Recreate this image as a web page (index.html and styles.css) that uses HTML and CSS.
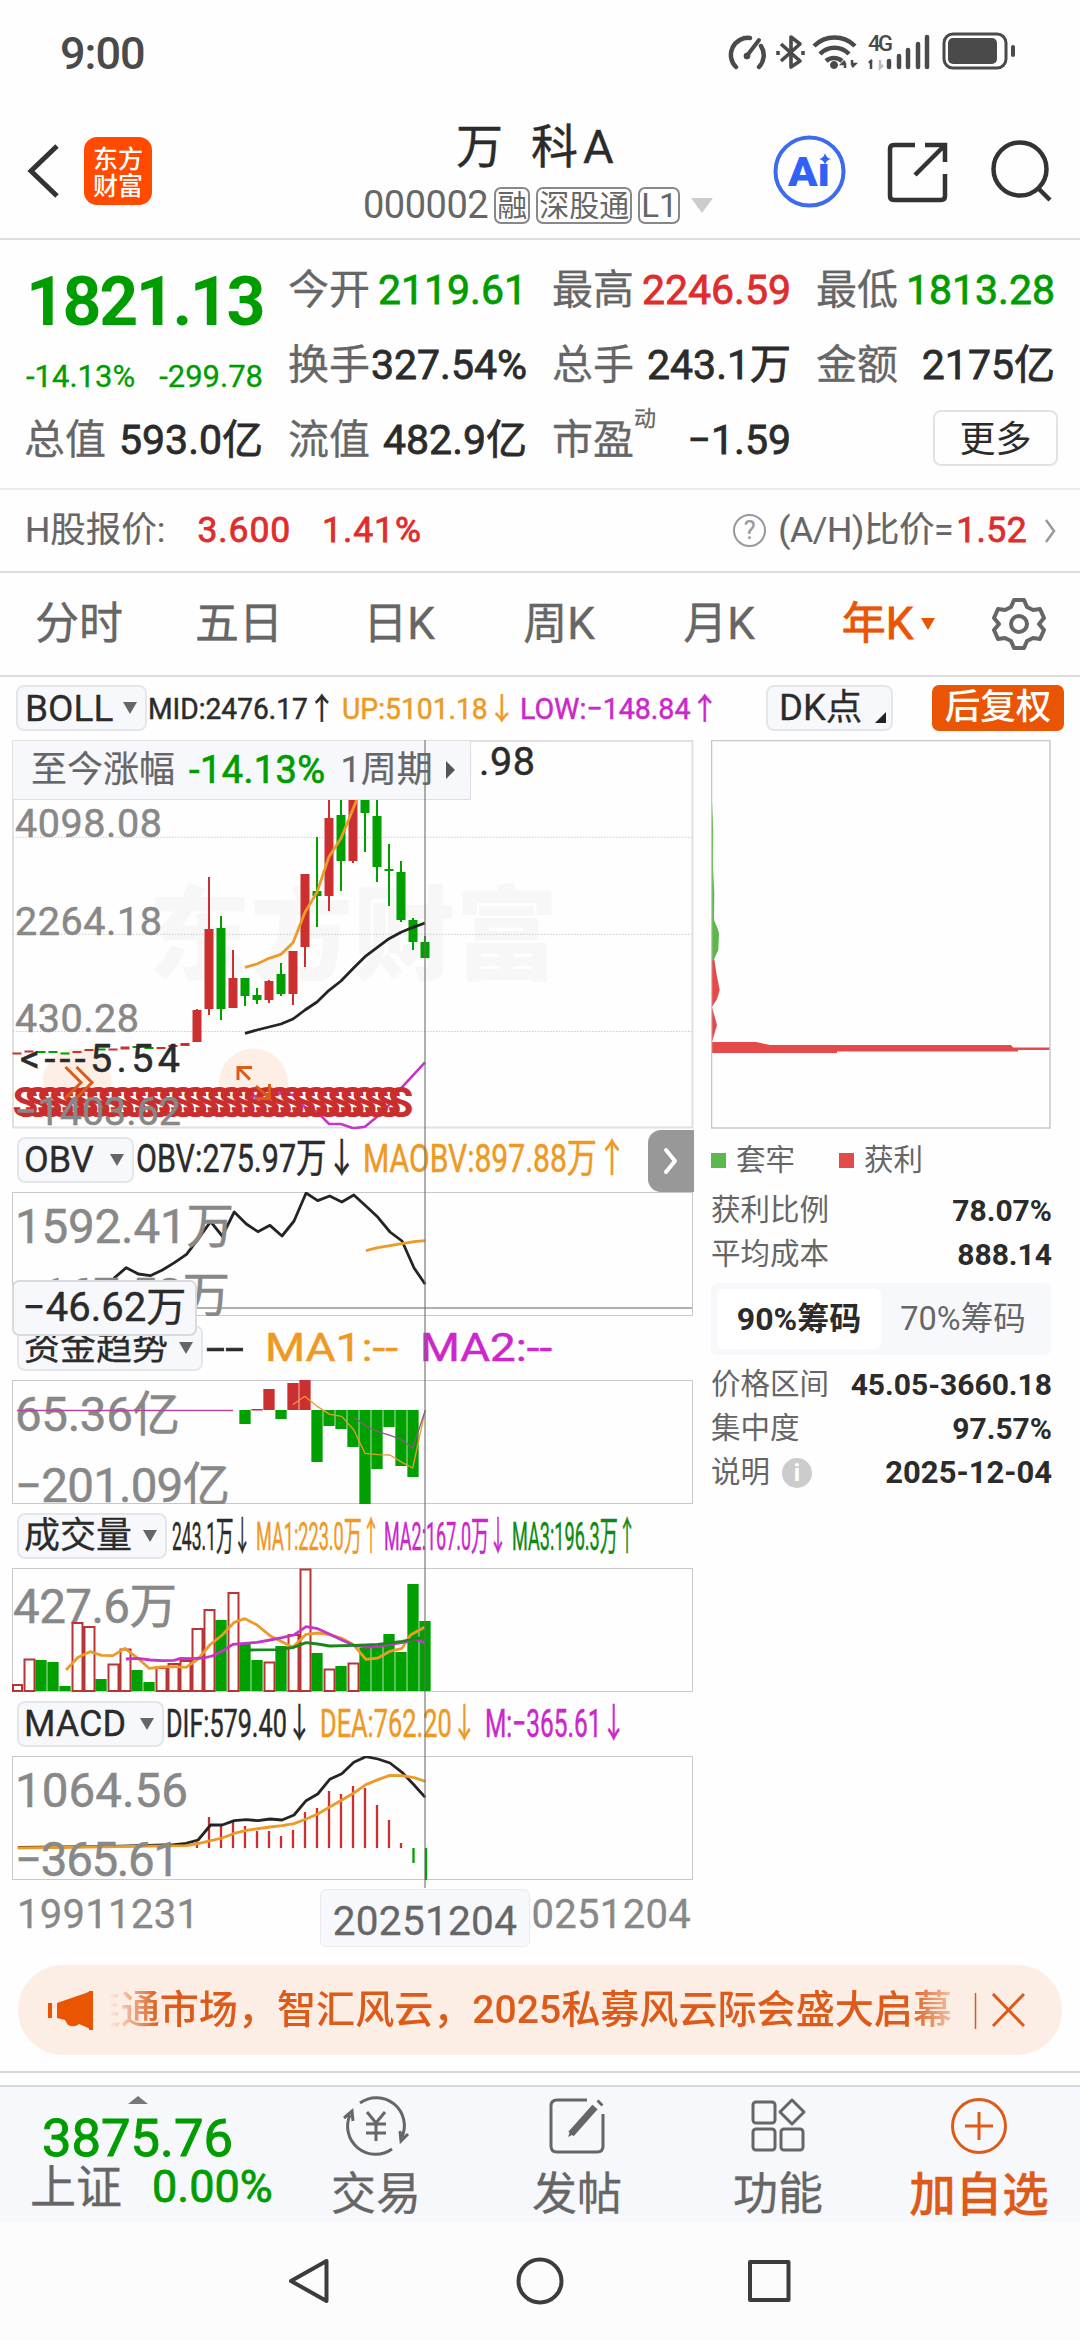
FILE: index.html
```html
<!DOCTYPE html>
<html lang="zh-CN">
<head>
<meta charset="utf-8">
<title>万 科A 000002</title>
<link rel="stylesheet" href="styles.css">
</head>
<body>
<div class="status">
  <span class="clock">9:00</span>
  <svg class="status-icons" width="300" height="44" viewBox="722 30 300 44" fill="none" stroke="#4a4a4a">
    <path d="M736 67a17 17 0 0 1 14-29M761 46a17 17 0 0 1-2 21" stroke-width="4.5" stroke-linecap="round"/>
    <path d="M759 40L746 57" stroke-width="4" stroke-linecap="round"/><circle cx="747" cy="56" r="3" fill="#4a4a4a"/>
    <path d="M781 44L800 61L791 67V37L800 44L781 61" stroke-width="3.6" stroke-linejoin="round"/>
    <path d="M778 51v4M803 51v4" stroke-width="3.5"/>
    <path d="M814 46a29 29 0 0 1 41 0M820 54a20 20 0 0 1 29 0M826 61a12 12 0 0 1 16 0" stroke-width="4.5"/>
    <circle cx="834" cy="65" r="3.5" fill="#4a4a4a"/>
    <path d="M845 61l-3 3h3v4M852 67l3-3h-3v-4" stroke-width="2.5"/>
    <text class="net" x="868" y="51" textLength="25">4G</text>
    <path d="M871 61v8M869 63l3-3" stroke-width="2.5"/><path d="M880 60v8l3-3" stroke="#bbb" stroke-width="2.5"/>
    <path d="M889 61v6M899 56v11M908 50v17M918 44v23M927 37v30" stroke-width="4.5" stroke-linecap="round"/>
    <rect x="944" y="34" width="62" height="34" rx="9" stroke-width="3"/>
    <rect x="948" y="38" width="49" height="26" rx="5" fill="#4a4a4a" stroke="none"/>
    <path d="M1013 47v8" stroke-width="4" stroke-linecap="round"/>
  </svg>
</div>
<header class="header">
  <div class="header-left">
    <svg width="38" height="60" viewBox="25 142 38 60" fill="none" stroke="#333" stroke-width="5"><path d="M57 147L31 172L57 197"/></svg>
    <div class="logo"><span>东方</span><span>财富</span></div>
  </div>
  <div class="title-block">
    <div class="name"><span>万</span><span>科A</span></div>
    <div class="code"><span class="digits">000002</span><i>融</i><i>深股通</i><i>L1</i><b class="drop"></b></div>
  </div>
  <svg class="header-icons" width="290" height="80" viewBox="770 132 290 80" fill="none" stroke="#333" stroke-width="4.5">
    <circle cx="808.5" cy="171.5" r="34" stroke="#3c6bed" stroke-width="4"/>
    <text class="ai" x="787" y="186" textLength="42" lengthAdjust="spacingAndGlyphs">Aı</text>
    <path d="M824 153q1 5 6 6q-5 1-6 6q-1-5-6-6q5-1 6-6z" fill="#2f62f5" stroke="none"/>
    <path d="M914 145H893q-4 0-4 4V196q0 4 4 4H940q4 0 4-4V174M924 145h20v17M943 146L914 175"/>
    <circle cx="1019" cy="169" r="26.5"/><path d="M1037 188L1049 200"/>
  </svg>
</header>
<section class="quote">
  <div class="price">
    <strong>1821.13</strong>
    <div class="change"><span>-14.13%</span><span>-299.78</span></div>
  </div>
  <div class="cell"><span>今开</span><b class="down">2119.61</b></div>
  <div class="cell"><span>最高</span><b class="up">2246.59</b></div>
  <div class="cell"><span>最低</span><b class="down">1813.28</b></div>
  <div class="cell"><span>换手</span><b>327.54%</b></div>
  <div class="cell"><span>总手</span><b>243.1万</b></div>
  <div class="cell"><span>金额</span><b>2175亿</b></div>
  <div class="cell"><span>总值</span><b>593.0亿</b></div>
  <div class="cell"><span>流值</span><b>482.9亿</b></div>
  <div class="cell"><span>市盈<sup>动</sup></span><b>−1.59</b></div>
  <div class="more"><button>更多</button></div>
</section>
<section class="hshare">
  <span class="h-label">H股报价:</span><span class="up h-price">3.600</span><span class="up h-rate">1.41%</span>
  <span class="help">?</span><span class="ratio">(A/H)比价=</span><span class="up h-ratio">1.52</span>
  <svg class="chev" width="12" height="28" viewBox="0 0 12 28" fill="none" stroke="#999" stroke-width="2.5"><path d="M2 3L10 14L2 25"/></svg>
</section>
<nav class="tabs">
  <span>分时</span><span>五日</span><span>日K</span><span>周K</span><span>月K</span>
  <span class="active">年K<b class="drop"></b></span>
  <svg width="56" height="56" viewBox="-28 -28 56 56" fill="none" stroke="#666" stroke-width="4" stroke-linejoin="round">
    <path d="M-5-24H5L8-17L14-14L21-15L25-6L20 0L25 6L21 15L14 14L8 17L5 24H-5L-8 17L-14 14L-21 15L-25 6L-20 0L-25-6L-21-15L-14-14L-8-17Z"/><circle r="8"/>
  </svg>
</nav>
<section class="boll-row">
  <span class="pick boll">BOLL<b class="drop"></b></span>
  <svg class="readout" width="580" height="50" viewBox="147 682 580 50">
    <text x="148" y="719" textLength="188" lengthAdjust="spacingAndGlyphs" class="t30 ink">MID:2476.17↑</text>
    <text x="342" y="719" textLength="174" lengthAdjust="spacingAndGlyphs" class="t30 orange">UP:5101.18↓</text>
    <text x="520" y="719" textLength="199" lengthAdjust="spacingAndGlyphs" class="t30 violet">LOW:−148.84↑</text>
  </svg>
  <span class="pick dk">DK点<b class="corner"></b></span>
  <span class="adjust">后复权</span>
</section>
<main class="analysis">
  <div class="charts">
    <svg class="panel" width="682" height="389" viewBox="12 740 682 389">
      <rect x="13" y="741" width="679.5" height="386.500" class="frame light"/>
      <text x="148" y="972" textLength="410" lengthAdjust="spacingAndGlyphs" class="watermark">东方财富</text>
      <path class="dots" d="M13 837.300H692M13 934.300H692M13 1031.500H692"/>
      <circle cx="77" cy="1083" r="34.500" class="knob"/><circle cx="253.500" cy="1083" r="34.500" class="knob"/>
      <g class="wick">
        <path class="r" d="M197 1009V1042M209 877V1015M233 950V1008M269 980V1003M293 951V1005M305 874V967M329 780V911M353 780V863"/>
        <path class="g" d="M221 916V1020M245 978V1006M257 988V1004M281 963V996M317 837V927M341 790V891M365 780V852M377 790V882M389 844V906M401 861V922M413 918V950M425 936V958"/>
      </g>
      <g class="body">
        <path class="r" d="M197 1010V1042M209 929V1009M233 978V1008M269 981V1000M293 951V994M305 874V947M329 818V896M353 790V861"/>
        <path class="g" d="M221 928V1009M245 978V996M257 995V1000M281 974V994M317 891V896M341 815V861M365 780V813M377 816V867M389 869V871M401 872V920M413 920V942M425 942V958"/>
        <path class="r" d="M17 1052.500v2M29 1050.500v2M77 1051v2M89 1049v2M113 1048.500v2M125 1046.500v3M161 1047v2M173 1045v2M185 1043v3"/>
        <path class="g" d="M41 1051v2M53 1051v2M65 1052.500v2M101 1048.500v2M137 1046v2M149 1047v2"/>
      </g>
      <g transform="translate(0 720) scale(.33333)" class="lines">
        <path class="orange" d="M735 742L771 732L807 715L843 703L879 668L915 577L951 517L987 410L1023 355L1060 265L1095 180"/>
        <path class="ink" d="M735 940L771 930L807 921L843 912L879 897L915 870L951 846L987 811L1023 783L1060 745L1095 710L1131 683L1167 656L1203 637L1239 622L1275 609"/>
      </g>
      <path class="violet thin2" transform="translate(0 720) scale(.33333)" d="M735 1135L771 1128L807 1122L843 1120L879 1125L915 1162L951 1175L987 1212L1023 1212L1060 1225L1095 1220L1131 1190L1167 1155L1203 1105L1275 1027"/>
      <text x="12.500 24.600 36.700 48.800 60.900 73 85.100 97.200 109.300 121.400 133.500 145.600 157.700 169.800 181.900 194 206.100 218.200 230.300 242.400 254.500 266.600 278.700 290.800 302.900 315 327.100 339.200 351.300 363.400 375.500 387.600" y="1117" class="sells">SSSSSSSSSSSSSSSSSSSSSSSSSSSSSSSS</text>
      <path class="arrows" d="M65.500 1067L81 1082.500L65.500 1098M76.500 1067L92 1082.500L76.500 1098M238 1080V1067.500H252M239 1068.500L250 1079.500M269.500 1084V1098.500H255M268 1097L256 1086"/>
      <text x="15" y="836.500" textLength="147" class="t40 axis">4098.08</text>
      <text x="15" y="934.500" textLength="147" class="t40 axis">2264.18</text>
      <text x="15" y="1031.500" textLength="124" class="t40 axis">430.28</text>
      <text x="15" y="1125" textLength="166" class="t40 axis">−1403.62</text>
      <text x="20" y="1072" textLength="160" class="t40 ink">&lt;---5.54</text>
      <text x="388" y="775" textLength="147" class="t40 ink">5931.98</text>
    </svg>
    <div class="since"><span>至今涨幅</span><span class="down">-14.13%</span><span>1周期</span><b></b></div>

    <div class="ind"><span class="pick" style="width:117px">OBV<b class="drop"></b></span>
      <svg class="readout" width="540" height="64" viewBox="134 1128 540 64">
        <text x="136" y="1172" textLength="221" lengthAdjust="spacingAndGlyphs" class="t40 ink">OBV:275.97万↓</text>
        <text x="363" y="1172" textLength="264" lengthAdjust="spacingAndGlyphs" class="t40 orange">MAOBV:897.88万↑</text>
      </svg>
      <span class="expand"><svg width="16" height="28" viewBox="0 0 16 28" fill="none" stroke="#fff" stroke-width="4" stroke-linecap="round" stroke-linejoin="round"><path d="M3 3L12 14L3 25"/></svg></span>
    </div>
    <svg class="panel" width="682" height="124" viewBox="12 1192 682 124">
      <rect x="12.500" y="1192.500" width="680" height="123" class="frame"/>
      <g transform="translate(0 1130) scale(.4462 .33333)" class="lines">
        <path class="ink" d="M255 445L283 413L310 432L337 437L364 420L391 398L418 373L445 325L472 275L498 318L525 246L552 282L578 305L605 286L632 318L659 273L686 189L712 212L739 198L766 216L793 195L820 228L847 262L874 306L901 333L928 414L953 463"/>
        <path class="orange" d="M820 362L847 353L874 347L901 341L928 335L953 332"/>
      </g>
      <path d="M13 1308H692" class="cross"/>
      <text x="15" y="1243" textLength="219" class="t48 axis">1592.41万</text>
      <text x="15" y="1312" textLength="215" class="t48 axis">−167.58万</text>
    </svg>

    <div class="ind"><span class="pick" style="width:186px">资金趋势<b class="drop"></b></span>
      <svg class="readout" width="480" height="64" viewBox="203 1316 480 64">
        <text x="206" y="1361" textLength="38" lengthAdjust="spacingAndGlyphs" class="t40 ink">--</text>
        <text x="265" y="1361" textLength="133" lengthAdjust="spacingAndGlyphs" class="t40 orange">MA1:--</text>
        <text x="420" y="1361" textLength="132" lengthAdjust="spacingAndGlyphs" class="t40 violet">MA2:--</text>
      </svg>
    </div>
    <div class="level">−46.62万</div>
    <svg class="panel" width="682" height="124" viewBox="12 1380 682 124">
      <rect x="12.500" y="1380.500" width="680" height="123" class="frame"/>
      <text x="15" y="1431" textLength="165" class="t48 axis">65.36亿</text>
      <text x="15" y="1502" textLength="215" class="t48 axis">−201.09亿</text>
      <path d="M17 1410.500H233" stroke="#b5459f" stroke-width="1.500"/>
      <g class="fund">
        <path class="r" d="M257 1409V1410.500M269 1389V1410M293 1383V1410M305 1380V1410"/>
        <path class="g" d="M245 1410V1424M281 1410V1419M317 1410V1462M329 1410V1426M341 1410V1429M353 1410V1447M365 1410V1504M377 1410V1469M389 1410V1427M401 1410V1466M413 1410V1477"/>
      </g>
      <g transform="translate(0 1320) scale(.4462 .33333)" class="lines fine">
        <path class="orange" d="M656 254L683 229L712 260L739 283L766 289L793 330L818 400L847 404L874 405L901 427L925 444L953 271"/>
        <path class="mauve" d="M793 292L820 318L847 335L874 346L897 357L925 384L953 271"/>
      </g>
    </svg>

    <div class="ind"><span class="pick" style="width:150px">成交量<b class="drop"></b></span>
      <svg class="readout" width="500" height="64" viewBox="167 1504 500 64">
        <text x="172" y="1550" textLength="79" lengthAdjust="spacingAndGlyphs" class="t40 ink">243.1万↓</text>
        <text x="256" y="1550" textLength="124" lengthAdjust="spacingAndGlyphs" class="t40 orange">MA1:223.0万↑</text>
        <text x="384" y="1550" textLength="123" lengthAdjust="spacingAndGlyphs" class="t40 violet">MA2:167.0万↓</text>
        <text x="512" y="1550" textLength="124" lengthAdjust="spacingAndGlyphs" class="t40 green">MA3:196.3万↑</text>
      </svg>
    </div>
    <svg class="panel" width="682" height="124" viewBox="12 1568 682 124">
      <rect x="12.500" y="1568.500" width="680" height="123" class="frame"/>
      <text x="13" y="1623" textLength="164" class="t48 axis">427.6万</text>
      <path class="hollow" d="M13 1691V1685H22V1691ZM24.500 1691V1659.500H34.500V1691ZM72.500 1691V1623H82.500V1691ZM84.500 1691V1627H94.500V1691ZM108.500 1691V1664.500H118.500V1691ZM120.500 1691V1649.500H130.500V1691ZM156.500 1691V1668H166.500V1691ZM168.500 1691V1664H178.500V1691ZM180.500 1691V1661H190.500V1691ZM192.500 1691V1629H202.500V1691ZM204.500 1691V1610H214.500V1691ZM228.500 1691V1593H238.500V1691ZM264.500 1691V1662.500H274.500V1691ZM288.500 1691V1635H298.500V1691ZM300.500 1691V1569.500H310.500V1691ZM324.500 1691V1669.500H334.500V1691ZM348.500 1691V1663.500H358.500V1691Z"/>
      <path class="fund g" d="M41 1660V1691M53 1662V1691M65 1686V1691M101 1679V1691M137 1670V1691M149 1682V1691M221 1620V1691M245 1644V1691M257 1660V1691M281 1646V1691M317 1653V1691M341 1666V1691M365 1648V1691M377 1646V1691M389 1634V1691M401 1652V1691M413 1584V1691M425 1621V1691"/>
      <g transform="translate(0 1540) scale(.4462 .33333)" class="lines">
        <path class="orange" d="M148 390L175 352L202 335L228 346L253 347L280 325L309 355L334 385L361 381L390 380L417 382L444 357L470 315L498 285L525 247L549 236L576 255L605 287L632 305L656 322L686 283L712 279L739 284L766 295L793 315L820 358L847 354L874 334L901 325L920 285L951 262"/>
        <path class="violet" d="M282 357L309 355L337 360L364 362L390 361L405 355L430 356L457 354L475 348L500 332L522 313L549 310L576 307L605 300L632 293L659 285L686 260L712 266L739 283L766 300L793 316L820 321L847 320L874 313L901 308L932 297L951 308"/>
        <path class="green" d="M560 330L620 329L656 323L686 308L712 312L739 318L793 316L847 313L901 304L925 298L945 293"/>
      </g>
    </svg>

    <div class="ind"><span class="pick" style="width:147px">MACD<b class="drop"></b></span>
      <svg class="readout" width="500" height="64" viewBox="164 1692 500 64">
        <text x="166" y="1737" textLength="146" lengthAdjust="spacingAndGlyphs" class="t40 ink">DIF:579.40↓</text>
        <text x="320" y="1737" textLength="157" lengthAdjust="spacingAndGlyphs" class="t40 orange">DEA:762.20↓</text>
        <text x="485" y="1737" textLength="141" lengthAdjust="spacingAndGlyphs" class="t40 violet">M:−365.61↓</text>
      </svg>
    </div>
    <svg class="panel" width="682" height="124" viewBox="12 1756 682 124">
      <rect x="12.500" y="1756.500" width="680" height="123" class="frame"/>
      <g class="hist">
        <path class="r" d="M197 1842V1848M209 1817V1848M221 1824V1848M233 1821V1848M245 1826V1848M257 1831V1848M269 1831V1848M281 1836V1848M293 1830V1848M305 1812V1848M317 1808V1848M329 1791V1848M341 1794V1848M353 1786V1848M365 1788V1848M377 1805V1848M389 1820V1848M401 1843V1848"/>
        <path class="g" d="M413.500 1848V1863M426 1848V1880"/>
      </g>
      <g transform="translate(0 1740) scale(.4462 .33333)" class="lines">
        <path class="ink" d="M40 322L250 319L390 314L417 310L444 300L472 255L498 255L525 242L552 239L578 242L605 237L632 240L659 225L686 182L712 162L739 118L766 101L793 67L820 50L847 57L874 69L901 97L928 135L953 172"/>
        <path class="orange" d="M40 324L417 317L444 311L472 302L498 294L525 280L552 271L605 261L632 257L659 251L686 237L712 222L739 201L766 180L793 159L820 134L847 119L874 106L901 107L928 113L953 124"/>
      </g>
      <text x="15" y="1807" textLength="173" class="t48 axis">1064.56</text>
      <text x="15" y="1876" textLength="165" class="t48 axis">−365.61</text>
    </svg>
    <div class="dates"><span>19911231</span><span>20251204</span><b>20251204</b></div>
    <i class="crosshair"></i>
  </div>

  <aside class="chips">
    <svg width="340" height="389" viewBox="711 740 340 389">
      <path fill="#5cb84a" d="M711 741L712 800L713.300 830L713 867L714.300 893L714 920L717 927L719 933L718.300 950L714 959.300H711Z"/>
      <path fill="#e54a4a" d="M711 959.300H714.300L716.700 975L719.700 990L717 999L712 1007L717 1025L712 1042H756L770 1045H1011L1013 1047.500H1050V1050H1018V1051.500H837V1053H711Z"/>
      <rect x="711.500" y="740.500" width="338.500" height="387.500" fill="none" stroke="#c8c8c8" stroke-width="1.500"/>
    </svg>
    <div class="legend"><i class="lg"></i><span>套牢</span><i class="lr"></i><span>获利</span></div>
    <div class="row"><span>获利比例</span><b>78.07%</b></div>
    <div class="row"><span>平均成本</span><b>888.14</b></div>
    <div class="switch"><b>90%筹码</b><span>70%筹码</span></div>
    <div class="row"><span>价格区间</span><b>45.05-3660.18</b></div>
    <div class="row"><span>集中度</span><b>97.57%</b></div>
    <div class="row"><span>说明<i class="info">i</i></span><b class="day">2025-12-04</b></div>
  </aside>
</main>
<div class="banner">
  <svg width="48" height="42" viewBox="47 1988 48 42" fill="#ea5504"><path d="M48 2002h4v15h-4zM57 2002L86 1992V2026L79 2023Q75 2027 68 2024L65 2019L57 2017ZM89 1990h4v39h-4z"/><path d="M86 1992l4-2v38l-4-2z"/></svg>
  <div class="marquee"><span>连通市场，智汇风云，2025私募风云际会盛大启幕</span></div>
  <svg class="close" width="52" height="40" viewBox="972 1989 52 40" fill="none" stroke="#dd5a18" stroke-width="2.500"><path d="M974.500 1992V2028" stroke-width="1.500"/><path d="M992 1993L1023 2025M1023 1993L992 2025" stroke-width="3"/></svg>
</div>
<div class="gap"></div>
<footer class="toolbar">
  <div class="index"><b class="tri"></b><strong>3875.76</strong><div><span>上证</span><em>0.00%</em></div></div>
  <div class="tool"><svg width="68" height="64" viewBox="-34 -32 68 64" fill="none" stroke="#666" stroke-width="3"><path d="M-16-23A28 28 0 0 1 26 11M16 23A28 28 0 0 1-26-11M-32-8L-24-15L-23-5M32 8L25 15L24 5"/><path d="M-9-14L0-3L9-14M0-3V15M-10-2H10M-10 7H10"/></svg><span>交易</span></div>
  <div class="tool"><svg width="68" height="64" viewBox="-34 -32 68 64" fill="none" stroke="#666" stroke-width="3"><path d="M10-26H-20Q-26-26-26-20V20Q-26 26-20 26H20Q26 26 26 20V-12"/><path d="M22-22L24-24M-6 8L18-19" stroke-width="7"/><path d="M-9 11L-6 3L-1 7Z" fill="#666" stroke="none"/></svg><span>发帖</span></div>
  <div class="tool"><svg width="68" height="64" viewBox="-34 -32 68 64" fill="none" stroke="#666" stroke-width="3" stroke-linejoin="round"><rect x="-25" y="-24" width="22" height="21" rx="3"/><rect x="-25" y="3" width="22" height="21" rx="3"/><rect x="3" y="3" width="22" height="21" rx="3"/><path d="M14-26L26-14L14-2L2-14Z"/></svg><span>功能</span></div>
  <div class="tool add"><svg width="68" height="64" viewBox="-34 -32 68 64" fill="none" stroke="#dd5a18" stroke-width="3"><circle r="26.500"/><path d="M-14 0H14M0-14V14"/></svg><span>加自选</span></div>
</footer>
<div class="sysnav">
  <svg width="1080" height="118" viewBox="0 2222 1080 118" fill="none" stroke="#3c3c3c" stroke-width="4" stroke-linejoin="round"><path d="M326.500 2261V2301L291 2281Z"/><circle cx="540" cy="2281" r="21.500"/><rect x="750" y="2262" width="38.500" height="38"/></svg>
</div>
</body>
</html>
```
FILE: styles.css
```css
* { box-sizing: border-box; }
body { margin: 0; width: 1080px; height: 2340px; overflow: hidden; background: #fefefe; color: #2b2b2b; font-family: Roboto, "Noto Sans CJK SC", sans-serif; display: flex; flex-direction: column; line-height: 1; white-space: nowrap; }
body > * { flex: none; }
svg { display: block; flex: none; }
b, strong { font-weight: 500; }
i, em { font-style: normal; }
.up { color: #e02c2c !important; }
.down { color: #009d00 !important; }
.drop { display: inline-block; border: 7px solid transparent; border-top: 12px solid #666; border-bottom: 0; }

.status { height: 104px; display: flex; justify-content: space-between; padding: 30px 58px 0 60px; }
.clock { font-size: 45px; font-weight: 500; line-height: 48px; color: #4a4a4a; letter-spacing: -1px; }
.net { font: 500 22px Roboto, sans-serif; fill: #4a4a4a; stroke: none; }

.header { height: 136px; border-bottom: 2px solid #dcdcdc; display: grid; grid-template-columns: 340px 431px 1fr; }
.header-left { display: flex; align-items: center; gap: 21px; padding: 0 0 0 25px; }
.logo { width: 68px; height: 68px; border-radius: 13px; background: #ff4a00; color: #fff; font: 500 25px/27px "Noto Sans CJK SC", sans-serif; display: flex; flex-direction: column; align-items: center; justify-content: center; }
.title-block { padding: 15px 0 0 23px; }
.name { display: flex; gap: 25px; padding-left: 93px; font-size: 47px; line-height: 56px; height: 62px; letter-spacing: 3px; -webkit-text-stroke: .4px; }
.name span + span { letter-spacing: 5px; }
.code { display: flex; align-items: center; height: 40px; margin-top: 4px; color: #666; font-size: 30px; }
.code .digits { font-size: 38px; margin-right: 6px; letter-spacing: -.5px; }
.code i { border: 2px solid #888; border-radius: 7px; height: 37px; line-height: 33px; padding: 0 1px; margin-right: 6px; }
.code i:nth-of-type(3) { font-size: 33px; }
.code .drop { border-width: 15px 11px 0; border-top-color: #ccc; margin-left: 5px; }
.header-icons { margin-top: 28px; }
.ai { font: 900 41px Roboto, sans-serif; fill: #2f62f5; stroke: none; }

.quote { height: 250px; border-bottom: 2px solid #ececec; padding: 13px 25px 0; display: grid; grid-template-columns: repeat(4, 238px); column-gap: 26px; grid-template-rows: repeat(3, 75px); }
.price { grid-row: span 2; color: #009d00; padding: 9px 0 0 1px; }
.price strong { display: block; font-size: 68px; font-weight: 700; line-height: 80px; letter-spacing: -2.4px; }
.change { display: flex; justify-content: space-between; font-size: 31px; margin-top: 15px; line-height: 40px; -webkit-text-stroke: .3px; }
.cell { display: flex; justify-content: space-between; align-items: center; font-size: 41px; }
.cell span { color: #666; position: relative; -webkit-text-stroke: .3px; margin-left: -1px; }
.cell b { font-weight: 400; color: #2b2b2b; -webkit-text-stroke: .8px; }
sup { position: absolute; left: 82px; top: -12px; font-size: 22px; }
.more { display: flex; justify-content: flex-end; }
.more button { width: 125px; height: 56px; margin: 7px -3px 0 0; font: 400 36px "Noto Sans CJK SC", sans-serif; line-height: 46px; color: #2b2b2b; background: none; border: 2px solid #e3e3e3; border-radius: 8px; padding: 0 0 5px; }

.hshare { height: 83px; border-bottom: 2px solid #dcdcdc; display: flex; align-items: center; padding: 0 24px 0 25px; font-size: 35.500px; color: #666; -webkit-text-stroke: .2px; }
.hshare .up { -webkit-text-stroke: .8px; }
.h-price { margin-left: 32px; letter-spacing: .9px; }
.h-rate { margin-left: 31px; letter-spacing: .9px; }
.h-ratio { letter-spacing: .4px; }
.ratio { letter-spacing: -.4px; margin-right: 3px; }
.help { margin-left: auto; width: 33px; height: 33px; border: 2.500px solid #999; border-radius: 50%; color: #999; font-size: 25px; line-height: 29px; text-align: center; margin-right: 12px; }
.chev { margin-left: 17px; }

.tabs { height: 104px; border-bottom: 2px solid #dcdcdc; display: grid; grid-template-columns: repeat(5, 160px) 178px 1fr; align-items: center; justify-items: center; font-size: 44px; color: #666; padding-right: 20px; -webkit-text-stroke: .4px; }
.tabs > span { margin-left: -2px; }
.tabs .active { color: #ea5504; display: flex; align-items: center; gap: 8px; margin-left: -1px; -webkit-text-stroke: .9px; }
.tabs .active .drop { border-top-color: #ea5504; }

.boll-row { height: 63px; display: flex; align-items: flex-start; padding: 8px 16px 0; }
.boll-row .readout { margin-top: -3px; }
.pick { display: flex; align-items: center; justify-content: space-between; flex: none; height: 46px; padding: 0 8px 0 5px; background: #f7f8fb; border: 2px solid #e4e6ea; border-radius: 8px; font-size: 36px; color: #2b2b2b; -webkit-text-stroke: .3px; }
.pick.boll { width: 131px; font-size: 37px; padding-left: 7px; }
.pick.dk { width: 127px; margin-left: 39px; font-size: 36.500px; padding: 0 5px 0 11px; }
.corner { border-left: 11px solid transparent; border-bottom: 11px solid #222; align-self: flex-end; margin-bottom: 6px; }
.adjust { margin-left: auto; width: 132px; height: 46px; border-radius: 7px; background: #e95504; color: #fff; font-size: 35.500px; line-height: 45px; text-align: center; font-weight: 500; }

.t30 { font-size: 30px; } .t40 { font-size: 39.500px; } .t48 { font-size: 47.500px; }
text { white-space: pre; }
text.ink { fill: #2b2b2b; stroke: #2b2b2b; stroke-width: .5; } text.orange { fill: #ee991f; stroke: #ee991f; stroke-width: .5; } text.violet { fill: #cb27cb; stroke: #cb27cb; stroke-width: .5; } text.green { fill: #0e8a12; stroke: #0e8a12; stroke-width: .5; } .axis { fill: #888; stroke: #888; stroke-width: .5; }
.analysis { height: 1210px; display: grid; grid-template-columns: 682px 340px; column-gap: 17px; padding-left: 12px; }
.charts { position: relative; }
.frame { fill: none; stroke: #c9c9c9; } .frame.light { stroke: #e0e0e0; stroke-width: 2; }
.watermark { font: 900 102px "Noto Sans CJK SC", sans-serif; fill: #f7f7f7; }
.dots { stroke: #ccc; stroke-dasharray: 1.500 1.500; }
.knob { fill: #fdeee6; }
.r { stroke: #cc2f2f; } .g { stroke: #00a000; }
.wick { stroke-width: 2; } .body { stroke-width: 9; } .fund { stroke-width: 11.300; } .hist { stroke-width: 2.300; }
.lines path { fill: none; stroke-width: 2.800; vector-effect: non-scaling-stroke; stroke-linejoin: round; }
.lines.fine path { stroke-width: 1.300; }
path.orange { stroke: #ec9a28; } path.ink { stroke: #242424; } path.violet { stroke: #c436c8; } path.green { stroke: #1b861b; } path.mauve { stroke: #8b5a83; }
.thin2 { fill: none; stroke-width: 2.600; vector-effect: non-scaling-stroke; }
.arrows { fill: none; stroke: #dd5a18; stroke-width: 3; }
.sells { font: 700 42px Roboto, sans-serif; fill: #cb2d2d; }
.hollow { fill: #fff; stroke: #b93434; stroke-width: 2; }
.cross { stroke: #b0b0b0; stroke-width: 2; }
.crosshair { position: absolute; left: 412px; top: 0; width: 2px; height: 1148px; background: rgba(110,110,110,.55); }
.since { position: absolute; left: 0; top: 0; width: 459px; height: 60px; background: #f7f8fb; border: 1.500px solid #e0e0e2; display: flex; align-items: center; padding-left: 18px; font-size: 36px; color: #666; -webkit-text-stroke: .2px; }
.since .down { font-size: 38px; margin: 0 15px 0 14px; letter-spacing: .4px; -webkit-text-stroke: .7px; }
.since b { border: 9px solid transparent; border-left-color: #555; border-right: 0; margin-left: 13px; }
.ind { height: 64px; display: flex; position: relative; padding-left: 5px; }
.ind .pick { margin-top: 9px; }
.since + .ind { margin-top: -1px; }
.expand { position: absolute; right: 0; top: 2px; width: 46px; height: 62px; background: #989898; border-radius: 13px 0 0 13px; display: flex; align-items: center; justify-content: center; }
.level { position: absolute; left: 0; top: 540px; width: 185px; height: 56px; background: #f7f8fb; border: 2px solid #d8dade; border-radius: 7px; font-size: 40px; line-height: 52px; text-align: center; -webkit-text-stroke: .4px; }
.dates { height: 66px; position: relative; display: flex; justify-content: space-between; padding: 15px 3px 0 5px; font-size: 40px; line-height: 40px; color: #888; letter-spacing: .3px; -webkit-text-stroke: .3px; }
.dates b { position: absolute; left: 308px; top: 9px; width: 210px; height: 58px; background: #f7f8fb; border: 1px solid #ebebee; border-radius: 6px; line-height: 62px; text-align: center; color: #666; font-size: 40.500px; font-weight: 400; z-index: 1; }

.chips { font-size: 29.500px; color: #666; padding-top: 0; }
.legend { display: flex; align-items: center; height: 60px; padding-top: 3px; }
.legend i { width: 15px; height: 15px; margin-right: 10px; }
.lg { background: #5cb84a; } .lr { background: #e54a4a; margin-left: 44px; }
.row { display: flex; justify-content: space-between; align-items: center; height: 44px; padding-bottom: 1px; }
.row b { color: #2b2b2b; font-weight: 700; font-size: 30px; margin-right: -1px; }
.row .day { font-size: 31px; }
.row span { display: flex; align-items: center; }
.info { width: 30px; height: 30px; border-radius: 50%; background: #ccc; color: #fff; font-size: 24px; font-weight: 700; line-height: 31px; text-align: center; margin-left: 12px; }
.switch { height: 72px; margin: 6px 0 8px; background: #f7f8fb; border-radius: 6px; padding: 6px; display: grid; grid-template-columns: 164px 1fr; align-items: center; justify-items: center; font-size: 32.500px; }
.switch b { width: 164px; height: 60px; font-size: 32px; line-height: 60px; background: #fff; border-radius: 6px; color: #2b2b2b; font-weight: 700; text-align: center; }

.banner { margin: 15px 18px 0; height: 90px; border-radius: 45px; background: #fceee5; display: flex; align-items: center; padding-left: 29px; color: #dd5a18; }
.marquee { width: 843px; margin-left: 14px; overflow: hidden; display: flex; justify-content: flex-end; font-size: 39.100px; line-height: 56px; font-weight: 500; -webkit-mask-image: linear-gradient(90deg, transparent, #000 50px, #000 800px, rgba(0,0,0,.3)); mask-image: linear-gradient(90deg, transparent, #000 50px, #000 800px, rgba(0,0,0,.3)); }
.close { margin-left: 21px; }
.gap { height: 32px; border-bottom: 2px solid #d5d8dc; background: linear-gradient(#d5d8dc, #d5d8dc) 0 16px / 100% 2px no-repeat; }
.toolbar { height: 135px; background: #f7f8fb; display: grid; grid-template-columns: 275px repeat(4, 201px); }
.index { display: flex; flex-direction: column; align-items: center; padding-top: 9px; }
.tri { border: 10px solid transparent; border-bottom: 8px solid #777; border-top: 0; }
.index strong { font-size: 52.500px; line-height: 52px; margin-top: 8px; color: #009d00; font-weight: 400; -webkit-text-stroke: 1px; }
.index div { display: flex; gap: 30px; align-items: center; font-size: 46px; line-height: 46px; color: #666; padding-left: 30px; align-self: flex-start; -webkit-text-stroke: .3px; }
.index em { color: #009d00; font-size: 45px; -webkit-text-stroke: .8px; }
.tool { display: flex; flex-direction: column; align-items: center; padding: 7px 0 0 1px; font-size: 45px; color: #666; -webkit-text-stroke: .3px; }
.tool span { margin-top: 11px; line-height: 52px; }
.tool.add { color: #dd5a18; font-size: 46.500px; font-weight: 500; }
.sysnav { height: 118px; background: #fcfcfc; }
```
